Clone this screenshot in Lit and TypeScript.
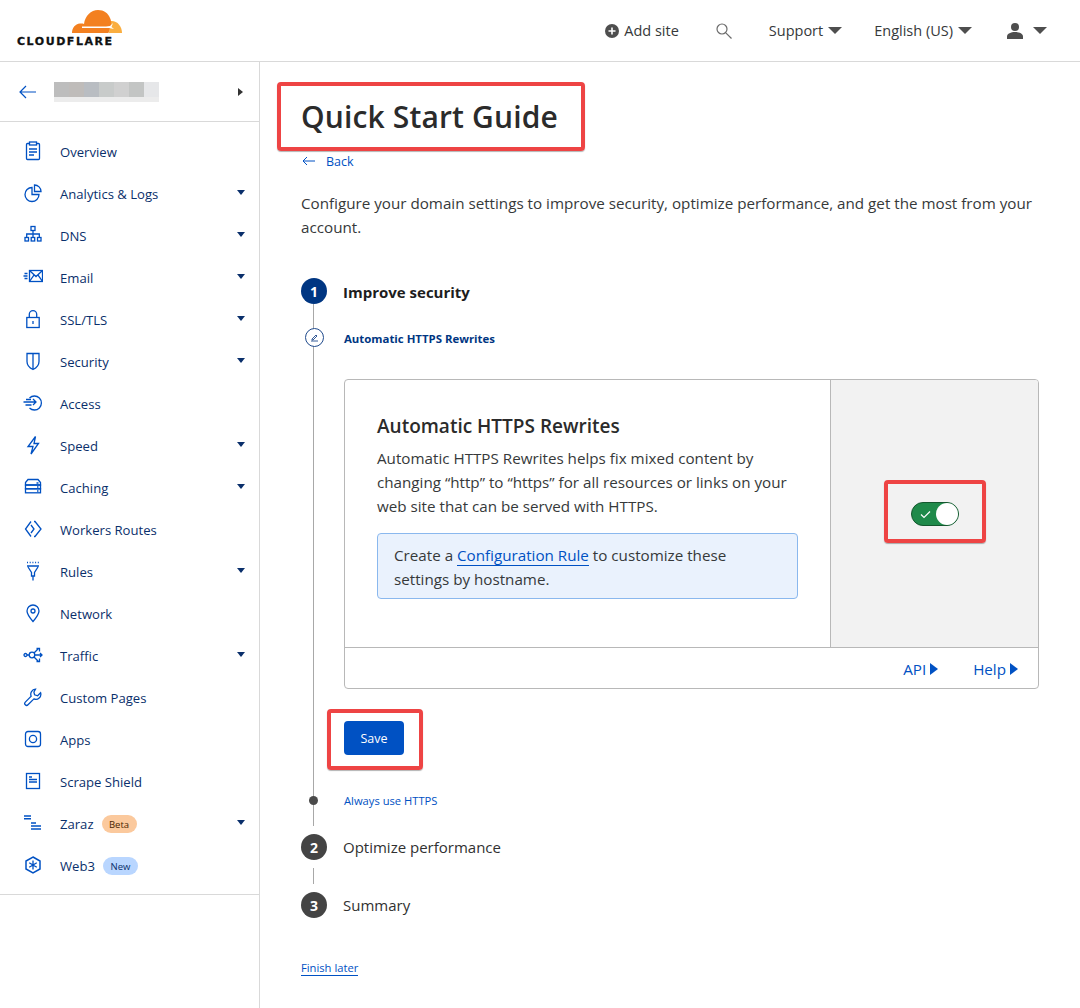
import { LitElement, css, html, svg } from 'lit';
import { customElement } from 'lit/decorators.js';

// every nav icon lives in a 20x20 box, stroked in the link blue
const icons: Record<string, ReturnType<typeof svg>> = {
  overview: svg`<rect x="3.5" y="2.5" width="13" height="16" rx="1"/><rect x="6.5" y="1" width="7" height="3" fill="#fff"/><path d="M6 8h8M6 11h8M6 14h5"/>`,
  analytics: svg`<path d="M9 4.5a7 7 0 1 0 7 7H9z"/><path d="M11.5 2a6.5 6.5 0 0 1 6.5 6.5h-6.5z"/>`,
  dns: svg`<rect x="8" y="1.5" width="4" height="4"/><path d="M10 5.5V9M3.7 12V9h12.6v3M10 9v3"/><rect x="2" y="12.5" width="3.5" height="3.5"/><rect x="8.2" y="12.5" width="3.5" height="3.5"/><rect x="14.5" y="12.5" width="3.5" height="3.5"/>`,
  email: svg`<rect x="6.5" y="3.5" width="13" height="11"/><path d="M6.5 3.5l6.5 6 6.5-6M6.5 14.5l4.6-6.6M19.5 14.5l-4.6-6.6M.5 9h4M1.5 6.5h3M1.5 11.5h3"/>`,
  lock: svg`<rect x="3.8" y="8.5" width="12.4" height="10"/><path d="M6.3 8.5V5.3a3.7 3.7 0 0 1 7.4 0v3.2M10 12v3"/>`,
  shield: svg`<path d="M4 2.5h12v8c0 4-2.800 6.500-6 8-3.200-1.500-6-4-6-8zM10 2.500v16"/>`,
  access: svg`<path d="M6.500 5a7 7 0 1 1 0 10M.5 9h12M2.500 12h6M3 6.500h5M10 6l3 3-3 3"/>`,
  speed: svg`<path d="M12.500 1.500L5 11.500h5l-2 7.500 7.500-10.500h-4.500z"/>`,
  caching: svg`<path d="M2.500 8V5.500L5 2.500h10l2.500 3V8z"/><rect x="2.500" y="8" width="15" height="3.800"/><rect x="2.500" y="11.800" width="15" height="4"/><path d="M13.500 6h2M14 10h1.500M14 14h1.500"/>`,
  workers: svg`<path d="M8 2.500L2.500 10 8 17.500M8 6l3 4-3 4M11 2.500h1L18 10l-6 7.500h-1"/>`,
  rules: svg`<path d="M4 1.500h12" stroke-dasharray="1 1.700" stroke-width="1.600"/><path d="M4 5h12M5 6l3.500 5.500V15h3v-3.500L15 6M10 15v4.500"/>`,
  network: svg`<path d="M10 18.500c-3-3.500-6-7-6-10.500a6 6 0 0 1 12 0c0 3.500-3 7-6 10.500z"/><circle cx="10" cy="8" r="2"/>`,
  traffic: svg`<circle cx="2.500" cy="10" r="1.500"/><circle cx="9" cy="10" r="2.800"/><path d="M4 10h2.200M11 8l4-4M11 12l4 4M11.800 10h7M17 8l2 2-2 2M13.500 3.500h3v3M13.500 16.500h3v-3"/>`,
  wrench: svg`<path d="M12.500 2.200a5 5 0 0 0-4.300 7L2.300 15.100a1.900 1.900 0 0 0 2.700 2.700l5.900-5.900a5 5 0 0 0 6.700-6.100l-3 3-3-1-.7-2.800z"/>`,
  apps: svg`<rect x="2.500" y="2.500" width="15" height="15" rx="2.500"/><circle cx="10" cy="10" r="3.600"/>`,
  scrape: svg`<rect x="3.500" y="2.500" width="13" height="15"/><path d="M6 6h3M6 8.500h8M6 11h8"/>`,
  zaraz: svg`<path d="M1 3h7M1 5.800h7M8 10h5M8 13h10M8 16h10" stroke-width="1.400"/>`,
  web3: svg`<path d="M10 2l7 4v8l-7 4-7-4V6z" stroke-width="1.500"/><path d="M10 5.500v9M6.200 7.800l7.600 4.400M13.800 7.800l-7.600 4.400"/>`,
};

type NavItem = { label: string; icon: string; caret?: boolean; badge?: string };

const navItems: NavItem[] = [
  { label: 'Overview', icon: 'overview' },
  { label: 'Analytics & Logs', icon: 'analytics', caret: true },
  { label: 'DNS', icon: 'dns', caret: true },
  { label: 'Email', icon: 'email', caret: true },
  { label: 'SSL/TLS', icon: 'lock', caret: true },
  { label: 'Security', icon: 'shield', caret: true },
  { label: 'Access', icon: 'access' },
  { label: 'Speed', icon: 'speed', caret: true },
  { label: 'Caching', icon: 'caching', caret: true },
  { label: 'Workers Routes', icon: 'workers' },
  { label: 'Rules', icon: 'rules', caret: true },
  { label: 'Network', icon: 'network' },
  { label: 'Traffic', icon: 'traffic', caret: true },
  { label: 'Custom Pages', icon: 'wrench' },
  { label: 'Apps', icon: 'apps' },
  { label: 'Scrape Shield', icon: 'scrape' },
  { label: 'Zaraz', icon: 'zaraz', caret: true, badge: 'Beta' },
  { label: 'Web3', icon: 'web3', badge: 'New' },
];

// the redacted zone name is a mosaic of grey tiles
const blurTiles = ['#bdbdbd', '#bfbcba', '#b9bdc2', '#c8cbca', '#d0d0d0', '#c3c5c4', '#e6e7e9'];

@customElement('app-root')
export class AppRoot extends LitElement {
  static styles = css`
    :host {
      display: block;
      height: 1008px;
      overflow: hidden;
      background: #fff;
      color: #313131;
      font-family: 'Open Sans', 'Noto Sans', sans-serif;
    }
    a {
      color: #0051c3;
      text-decoration: none;
    }
    .topbar {
      height: 61px;
      border-bottom: 1px solid #d9d9d9;
      display: flex;
      align-items: flex-start;
      box-sizing: content-box;
    }
    .logo {
      margin: 10px 0 0 17px;
      width: 106px;
      display: flex;
      flex-direction: column;
      align-items: flex-end;
    }
    .logo svg {
      display: block;
      margin-right: 1px;
    }
    .wordmark {
      align-self: flex-start;
      font-family: 'DejaVu Sans', sans-serif;
      font-weight: 700;
      font-size: 11px;
      line-height: 11px;
      letter-spacing: 1.55px;
      color: #111;
      -webkit-text-stroke: 0.3px #111;
      margin-top: 3px;
      white-space: nowrap;
    }
    .top-actions {
      margin-left: auto;
      margin-right: 33px;
      height: 61px;
      display: flex;
      align-items: center;
      font-size: 14.5px;
      color: #36393a;
    }
    .top-item {
      display: flex;
      align-items: center;
    }
    .top-item svg {
      display: block;
    }
    .caret-top {
      width: 0;
      height: 0;
      border-left: 7px solid transparent;
      border-right: 7px solid transparent;
      border-top: 7px solid #4e4e4e;
      margin-left: 5px;
    }
    .body {
      display: flex;
    }
    .sidebar {
      width: 259px;
      height: 946px;
      border-right: 1px solid #d9d9d9;
      flex: none;
    }
    .zone {
      height: 59px;
      border-bottom: 1px solid #d9d9d9;
      display: flex;
      align-items: center;
      padding-left: 19px;
      padding-right: 16px;
    }
    .blur {
      margin-left: 17px;
      display: flex;
      width: 104px;
    }
    .tile {
      width: 15px;
      height: 20px;
      flex: none;
    }
    .caret-right {
      margin-left: auto;
      width: 0;
      height: 0;
      border-top: 4px solid transparent;
      border-bottom: 4px solid transparent;
      border-left: 5px solid #333;
    }
    nav {
      padding: 9px 0 7px;
      border-bottom: 1px solid #d9d9d9;
    }
    .nav-item {
      height: 42px;
      display: flex;
      align-items: center;
      padding-left: 23px;
      padding-right: 14px;
      font-size: 13.1px;
      color: #0a2f6b;
    }
    .nav-item svg {
      width: 20px;
      height: 20px;
      flex: none;
      margin-right: 17px;
      margin-top: -3px;
      fill: none;
      stroke: #0051c3;
      stroke-width: 1.3;
    }
    .badge {
      margin-left: 8px;
      height: 18px;
      width: 35px;
      border-radius: 9px;
      display: flex;
      align-items: center;
      justify-content: center;
      font-size: 9.500px;
      background: #fbc99d;
      color: #4a2500;
    }
    .badge.new {
      background: #b9d6ff;
      color: #0a2f6b;
    }
    .caret-nav {
      margin-left: auto;
      margin-top: -4px;
      width: 0;
      height: 0;
      border-left: 4px solid transparent;
      border-right: 4px solid transparent;
      border-top: 5px solid #0a2f6b;
    }
    main {
      flex: 1;
      padding: 35px 41px 0 41px;
      position: relative;
      min-width: 0;
    }
    h1 {
      margin: 0;
      font-size: 30px;
      line-height: 40px;
      font-weight: 600;
      letter-spacing: 0.15px;
      color: #2b2b2b;
    }
    .back {
      margin-top: 13px;
      height: 22px;
      display: flex;
      align-items: center;
      font-size: 12.500px;
      padding-left: 1px;
    }
    .back svg {
      margin-right: 10px;
      display: block;
    }
    .intro {
      margin: 19px 0 0;
      font-size: 15.2px;
      line-height: 24px;
      color: #36393a;
    }
    .steps {
      margin-top: 39px;
      position: relative;
    }
    .rail {
      position: absolute;
      left: 12px;
      width: 1px;
      background: #a8a8a8;
    }
    .step {
      display: flex;
      align-items: center;
      height: 26px;
      position: relative;
      font-size: 15px;
    }
    .step .num {
      width: 26px;
      height: 26px;
      border-radius: 50%;
      background: #444;
      color: #fff;
      display: flex;
      align-items: center;
      justify-content: center;
      font-weight: 700;
      font-size: 14px;
      margin-right: 16px;
    }
    .step.active {
      font-weight: 700;
      color: #1d1d1d;
    }
    .step.active .num {
      background: #003682;
    }
    .step.active .label {
      margin-top: 2px;
    }
    .sub {
      display: flex;
      align-items: center;
      height: 19px;
      margin-top: 24px;
      font-size: 11.4px;
      position: relative;
    }
    .sub .mark {
      width: 19px;
      height: 19px;
      box-sizing: border-box;
      margin-left: 4px;
      margin-right: 20px;
      border: 1px solid #1f4a8c;
      border-radius: 50%;
      background: #fff;
      display: flex;
      align-items: center;
      justify-content: center;
    }
    .sub b {
      color: #003682;
      font-weight: 700;
      margin-top: 2px;
    }
    .card {
      margin: 32px 0 0 43px;
      border: 1px solid #b8b8b8;
      border-radius: 4px;
      height: 308px;
      display: flex;
      flex-direction: column;
      overflow: hidden;
      background: #fff;
    }
    .card-main {
      flex: 1;
      display: flex;
      min-height: 0;
    }
    .card-text {
      width: 485px;
      box-sizing: border-box;
      padding: 33px 32px 0;
    }
    .card-text h2 {
      margin: 0;
      font-size: 19px;
      line-height: 27px;
      font-weight: 600;
      color: #2b2b2b;
    }
    .card-text p {
      margin: 6px 0 0;
      font-size: 15.2px;
      line-height: 24px;
      color: #36393a;
    }
    .note {
      margin-top: 15px;
      width: 421px;
      height: 66px;
      box-sizing: border-box;
      padding: 9px 60px 9px 16px;
      background: #eaf2fd;
      border: 1px solid #8ab8ee;
      border-radius: 4px;
      font-size: 15.2px;
      line-height: 24px;
      color: #36393a;
    }
    .note a {
      border-bottom: 1px solid #0051c3;
    }
    .card-side {
      flex: 1;
      background: #f2f2f2;
      border-left: 1px solid #b8b8b8;
      display: flex;
      justify-content: center;
      padding-top: 122px;
    }
    .toggle {
      width: 48px;
      height: 24px;
      box-sizing: border-box;
      border-radius: 12px;
      background: #1f8a4a;
      border: 1px solid #14572e;
      display: flex;
      align-items: center;
      padding-left: 8px;
      position: relative;
    }
    .toggle svg {
      display: block;
    }
    .knob {
      position: absolute;
      right: 0;
      top: 0;
      width: 22px;
      height: 22px;
      border-radius: 50%;
      background: #fff;
    }
    .card-foot {
      height: 40px;
      border-top: 1px solid #b8b8b8;
      display: flex;
      justify-content: flex-end;
      align-items: center;
      padding-right: 20px;
      gap: 35px;
      font-size: 15.2px;
    }
    .card-foot a {
      display: flex;
      align-items: center;
      margin-top: 2px;
    }
    .tri {
      width: 0;
      height: 0;
      margin-left: 4px;
      border-top: 6px solid transparent;
      border-bottom: 6px solid transparent;
      border-left: 8px solid #0051c3;
    }
    .save {
      display: block;
      margin: 32px 0 0 43px;
      width: 60px;
      height: 34px;
      border: none;
      border-radius: 4px;
      background: #0051c3;
      color: #fff;
      font: 12.500px 'Open Sans', 'Noto Sans', sans-serif;
    }
    .sub.todo {
      margin-top: 37px;
      height: 16px;
    }
    .sub.todo .dot {
      width: 9px;
      height: 9px;
      border-radius: 50%;
      background: #4a4a4a;
      margin-left: 8px;
      margin-right: 26px;
    }
    .sub.todo a {
      font-size: 11.2px;
    }
    .step.two {
      margin-top: 26px;
    }
    .step.three {
      margin-top: 32px;
    }
    .finish {
      display: inline-block;
      margin-top: 42px;
      font-size: 11.2px;
      line-height: 15px;
      border-bottom: 1px solid #0051c3;
    }
    .callout {
      position: absolute;
      border: 4px solid #ee4444;
      border-radius: 4px;
      box-sizing: border-box;
      box-shadow: 0 1px 1px rgba(0, 0, 0, 0.3);
      pointer-events: none;
    }
  `;

  renderLogo() {
    return html`
      <div class="logo">
        <svg width="50" height="23" viewBox="0 0 50 23">
          <path fill="#faae40" d="M38 11c7-1 12 5 12 12H37z"/>
          <path fill="#f38020" d="M0 23c0-5 3-9 8-9.500 1.500-.1 3 0 4 .5C13 6 19 0 26 0c6 0 10 3 12 8 1 2 1.500 4 1 7l-2.500 8z"/>
          <path fill="#fff" d="M10 16.600h24l4-.6 3-3-1.500 4 2.500 2-5-1H10z"/>
        </svg>
        <div class="wordmark">CLOUDFLARE</div>
      </div>
    `;
  }

  renderTopbar() {
    return html`
      <header class="topbar">
        ${this.renderLogo()}
        <div class="top-actions">
          <div class="top-item">
            <svg width="14" height="14" viewBox="0 0 14 14" style="margin-right:5px">
              <circle cx="7" cy="7" r="7" fill="#4e4e4e"/>
              <path d="M7 3.500v7M3.500 7h7" stroke="#fff" stroke-width="1.600"/>
            </svg>
            Add site
          </div>
          <div class="top-item" style="margin-left:37px">
            <svg width="16" height="16" viewBox="0 0 16 16" fill="none" stroke="#6b6b6b" stroke-width="1.200">
              <circle cx="6" cy="6" r="5"/><path d="M9.800 9.800L15.500 15.500"/>
            </svg>
          </div>
          <div class="top-item" style="margin-left:37px">Support<span class="caret-top"></span></div>
          <div class="top-item" style="margin-left:32px">English (US)<span class="caret-top"></span></div>
          <div class="top-item" style="margin-left:35px">
            <svg width="16" height="16" viewBox="0 0 16 16" fill="#4e4e4e">
              <circle cx="8" cy="4" r="4"/><path d="M0 16v-2.500C0 10.500 4 9 8 9s8 1.500 8 4.500V16z"/>
            </svg>
            <span class="caret-top" style="margin-left:10px"></span>
          </div>
        </div>
      </header>
    `;
  }

  renderSidebar() {
    return html`
      <aside class="sidebar">
        <div class="zone">
          <svg width="18" height="14" viewBox="0 0 18 14" fill="none" stroke="#0051c3" stroke-width="1.200">
            <path d="M17 7H1M7 1L1 7l6 6"/>
          </svg>
          <div class="blur">
            ${blurTiles.map(c => html`<div class="tile" style="background:linear-gradient(${c} 75%, #ececec 75%)"></div>`)}
          </div>
          <span class="caret-right"></span>
        </div>
        <nav>
          ${navItems.map(item => html`
            <div class="nav-item">
              <svg viewBox="0 0 20 20">${icons[item.icon]}</svg>
              ${item.label}
              ${item.badge ? html`<span class="badge ${item.badge === 'New' ? 'new' : ''}">${item.badge}</span>` : ''}
              ${item.caret ? html`<span class="caret-nav"></span>` : ''}
            </div>
          `)}
        </nav>
      </aside>
    `;
  }

  renderCard() {
    return html`
      <section class="card">
        <div class="card-main">
          <div class="card-text">
            <h2>Automatic HTTPS Rewrites</h2>
            <p>Automatic HTTPS Rewrites helps fix mixed content by changing “http” to “https” for all resources or links on your web site that can be served with HTTPS.</p>
            <div class="note">Create a <a href="#">Configuration Rule</a> to customize these settings by hostname.</div>
          </div>
          <div class="card-side">
            <div class="toggle">
              <svg width="11" height="9" viewBox="0 0 11 9" fill="none" stroke="#fff" stroke-width="1.200">
                <path d="M1 4.500l3 3 6-6"/>
              </svg>
              <span class="knob"></span>
            </div>
          </div>
        </div>
        <div class="card-foot">
          <a href="#">API<span class="tri"></span></a>
          <a href="#">Help<span class="tri"></span></a>
        </div>
      </section>
    `;
  }

  render() {
    return html`
      ${this.renderTopbar()}
      <div class="body">
        ${this.renderSidebar()}
        <main>
          <h1>Quick Start Guide</h1>
          <a class="back" href="#">
            <svg width="14" height="10" viewBox="0 0 14 10" fill="none" stroke="#0051c3" stroke-width="1">
              <path d="M13 5H1M5 1L1 5l4 4"/>
            </svg>
            Back
          </a>
          <p class="intro">Configure your domain settings to improve security, optimize performance, and get the most from your account.</p>
          <div class="steps">
            <div class="rail" style="top:26px;height:522px"></div>
            <div class="rail" style="top:590px;height:16px"></div>
            <div class="step active"><span class="num">1</span><span class="label">Improve security</span></div>
            <div class="sub">
              <span class="mark">
                <svg width="9" height="9" viewBox="0 0 9 9" fill="none" stroke="#1f4a8c" stroke-width="0.900">
                  <path d="M1 8h7M2 6l4-4 1 1-4 4H2z"/>
                </svg>
              </span>
              <b>Automatic HTTPS Rewrites</b>
            </div>
            ${this.renderCard()}
            <button class="save">Save</button>
            <div class="sub todo"><span class="dot"></span><a href="#">Always use HTTPS</a></div>
            <div class="step two"><span class="num">2</span>Optimize performance</div>
            <div class="step three"><span class="num">3</span>Summary</div>
          </div>
          <a class="finish" href="#">Finish later</a>
          <div class="callout" style="left:17px;top:20px;width:308px;height:69px"></div>
          <div class="callout" style="left:624px;top:418px;width:102px;height:63px"></div>
          <div class="callout" style="left:67px;top:647px;width:96px;height:61px"></div>
        </main>
      </div>
    `;
  }
}
